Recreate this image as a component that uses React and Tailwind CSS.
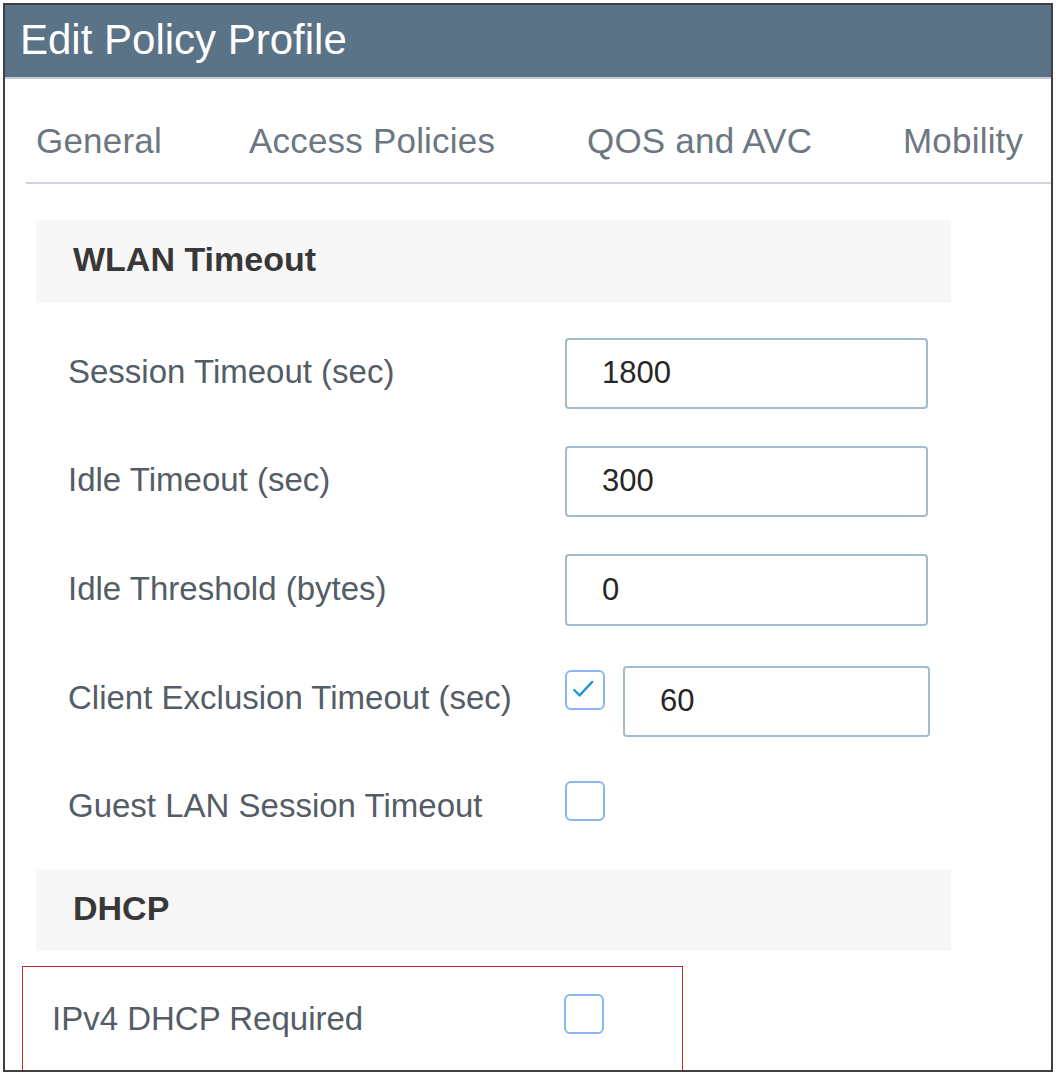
import React from "react";

const font = { fontFamily: '"Liberation Sans", Arial, sans-serif' };

const Checkbox = ({ checked, className = "" }) => (
  <div
    className={`w-[40px] h-[40px] shrink-0 rounded-[6px] border-2 border-[#8ab6f4] bg-white ${className}`}
  >
    {checked && (
      <svg viewBox="0 0 40 40" className="w-full h-full">
        <polyline
          points="8,20 14,26 28,11"
          fill="none"
          stroke="#1f97d4"
          strokeWidth="2.6"
          strokeLinecap="round"
          strokeLinejoin="round"
        />
      </svg>
    )}
  </div>
);

const TextBox = ({ value, className = "" }) => (
  <div
    className={`h-[71px] flex items-center rounded-[4px] border-2 border-[#a3bccb] bg-white pl-[35px] text-[31px] text-[#262626] ${className}`}
  >
    {value}
  </div>
);

const Row = ({ label, children, className = "", labelClass = "" }) => (
  <div className={`flex items-center pl-[32px] ${className}`}>
    <div className={`w-[497px] text-[33px] text-[#545d66] leading-none ${labelClass}`}>{label}</div>
    {children}
  </div>
);

const SectionHead = ({ title, className = "" }) => (
  <div
    className={`w-[915px] bg-[#f7f7f7] flex items-center pl-[37px] pb-[4px] text-[34px] font-bold text-[#383838] ${className}`}
  >
    {title}
  </div>
);

export default function App() {
  return (
    <div className="w-[1056px] h-[1075px] bg-white pt-[3px] pl-[3px]" style={font}>
      <div className="w-[1050px] h-[1069px] border-2 border-[#404040] overflow-hidden bg-white">
        <div className="h-[74px] bg-[#5a7387] border-b-2 border-[#c3ccd5] flex items-center pl-[15px] pb-[2px]">
          <h1 className="text-[42px] text-white leading-none">Edit Policy Profile</h1>
        </div>

        <div className="ml-[21px] h-[105px] border-b-2 border-[#cdd3d8] flex pl-[10px] pt-[44px] text-[35px] leading-none text-[#6c7781] tracking-[0.2px]">
          <span className="w-[213px]">General</span>
          <span className="w-[338px]">Access Policies</span>
          <span className="w-[316px]">QOS and AVC</span>
          <span>Mobility</span>
        </div>

        <div className="ml-[31px]">
          <SectionHead title="WLAN Timeout" className="mt-[36px] h-[83px]" />

          <Row label="Session Timeout (sec)" className="mt-[35px]" labelClass="pb-[4px]">
            <TextBox value="1800" className="w-[363px]" />
          </Row>
          <Row label="Idle Timeout (sec)" className="mt-[37px]" labelClass="pb-[4px]">
            <TextBox value="300" className="w-[363px]" />
          </Row>
          <Row label="Idle Threshold (bytes)" className="mt-[37px]" labelClass="pb-[4px]">
            <TextBox value="0" className="w-[363px] h-[72px]" />
          </Row>
          <Row label="Client Exclusion Timeout (sec)" className="mt-[40px]" labelClass="pb-[8px]">
            <div className="flex items-start gap-[18px]">
              <Checkbox checked className="mt-[4px]" />
              <TextBox value="60" className="w-[307px] h-[70px]" />
            </div>
          </Row>
          <Row label="Guest LAN Session Timeout" className="mt-[44px] h-[40px]" labelClass="pt-[8px]">
            <Checkbox />
          </Row>

          <SectionHead title="DHCP" className="mt-[48px] h-[82px]" />
        </div>

        <div className="ml-[17px] mt-[15px] w-[661px] h-[140px] border-[1.5px] border-[#c22a30] flex items-start pt-[27px] pl-[29px]">
          <div className="w-[512px] h-[40px] flex items-center pt-[9px] text-[33px] text-[#545d66] leading-none">
            IPv4 DHCP Required
          </div>
          <Checkbox />
        </div>
      </div>
    </div>
  );
}
